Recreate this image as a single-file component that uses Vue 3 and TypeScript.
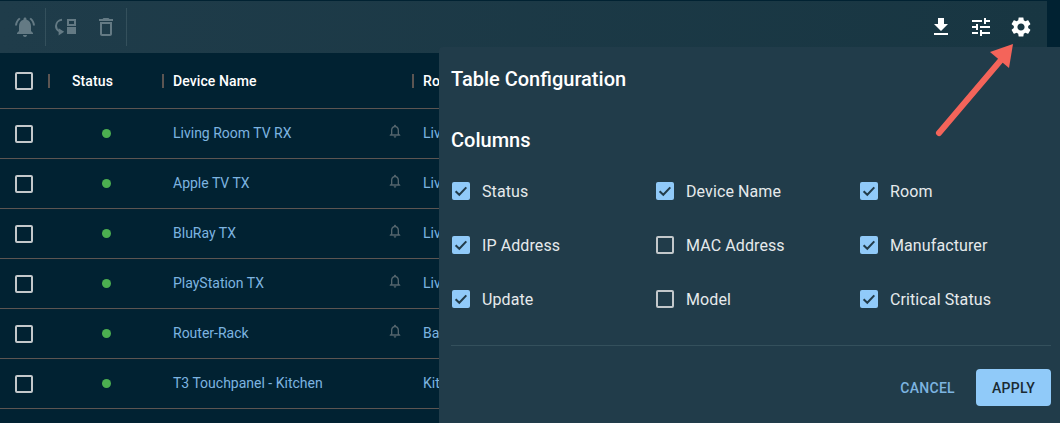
<template>
  <div class="page">
    <div class="toolbar">
      <div class="tool-group">
        <button class="tool dim">
          <svg viewBox="0 0 24 24"><path :d="icons.bellActive" /></svg>
        </button>
      </div>
      <div class="tool-group wide">
        <button class="tool dim">
          <svg viewBox="0 0 24 24">
            <path d="M8 4.800C4.500 5.200 2 7.800 2 11c0 2.300 1.300 4.200 3.300 5.200" fill="none" stroke="currentColor" stroke-width="2" />
            <path d="M4.600 13.300v7.200l5.600-3.700z" />
            <path d="M13 4h9v7h-9zm2 2v3h5V6zM13 12h9v7h-9z" fill-rule="evenodd" />
          </svg>
        </button>
        <button class="tool dim">
          <svg viewBox="0 0 24 24"><path :d="icons.trash" /></svg>
        </button>
      </div>
      <div class="tool-right">
        <button class="tool"><svg viewBox="0 0 24 24"><path :d="icons.download" /></svg></button>
        <button class="tool"><svg viewBox="0 0 24 24"><path :d="icons.tune" /></svg></button>
        <button class="tool"><svg viewBox="0 0 24 24"><path :d="icons.gear" /></svg></button>
      </div>
    </div>

    <div class="table">
      <div class="row head">
        <span class="cell-check"><span class="box"></span></span>
        <span class="th status-th">Status</span>
        <span class="th name-th">Device Name</span>
        <span class="th room-th">Room</span>
      </div>
      <div v-for="device in devices" :key="device.name" class="row">
        <span class="cell-check"><span class="box"></span></span>
        <span class="cell-status"><span class="dot"></span></span>
        <span class="cell-name">
          <span>{{ device.name }}</span>
          <svg v-if="device.bell" class="row-bell" viewBox="0 0 24 24"><path :d="icons.bell" /></svg>
        </span>
        <span class="cell-room">{{ device.room }}</span>
      </div>
    </div>

    <div class="panel">
      <h2 class="panel-title">Table Configuration</h2>
      <h3 class="panel-sub">Columns</h3>
      <div class="options">
        <label v-for="col in columns" :key="col.label" class="option">
          <span class="box" :class="{ checked: col.on }">
            <svg v-if="col.on" viewBox="0 0 18 18"><path d="M3.600 9.200l3.700 3.600 7-7.400" /></svg>
          </span>
          <span>{{ col.label }}</span>
        </label>
      </div>
      <div class="panel-actions">
        <button class="btn-cancel">CANCEL</button>
        <button class="btn-apply">APPLY</button>
      </div>
    </div>

    <svg class="arrow" viewBox="0 0 90 100">
      <path d="M9 93L71 20" />
      <path class="head-fill" d="M83 4L79 28L60 12z" />
    </svg>
  </div>
</template>

<script setup lang="ts">
const icons = {
  bellActive:
    'M7.58 4.08L6.15 2.65C3.75 4.48 2.17 7.3 2.03 10.5h2c.15-2.65 1.51-4.97 3.55-6.42zm12.39 6.42h2c-.15-3.2-1.73-6.02-4.12-7.85l-1.42 1.43c2.02 1.45 3.39 3.77 3.54 6.42zM18 11c0-3.07-1.64-5.64-4.5-6.32V4c0-.83-.67-1.5-1.5-1.5s-1.5.67-1.5 1.5v.68C7.63 5.36 6 7.92 6 11v5l-2 2v1h16v-1l-2-2v-5zm-6 11c.14 0 .27-.01.4-.04.65-.14 1.18-.58 1.44-1.18.1-.24.15-.5.15-.78h-4c.01 1.1.9 2 2.01 2z',
  bell:
    'M12 22c1.1 0 2-.9 2-2h-4c0 1.1.9 2 2 2zm6-6v-5c0-3.07-1.63-5.64-4.5-6.32V4c0-.83-.67-1.5-1.5-1.5s-1.5.67-1.5 1.5v.68C7.64 5.36 6 7.92 6 11v5l-2 2v1h16v-1l-2-2zm-2 1H8v-6c0-2.48 1.51-4.5 4-4.5s4 2.02 4 4.5v6z',
  trash: 'M6 19c0 1.1.9 2 2 2h8c1.1 0 2-.9 2-2V7H6v12zM8 9h8v10H8V9zm7.5-5l-1-1h-5l-1 1H5v2h14V4z',
  download: 'M19 9h-4V3H9v6H5l7 7 7-7zM5 18v2h14v-2H5z',
  tune: 'M3 17v2h6v-2H3zM3 5v2h10V5H3zm10 16v-2h8v-2h-8v-2h-2v6h2zM7 9v2H3v2h4v2h2V9H7zm14 4v-2H11v2h10zm-6-4h2V7h4V5h-4V3h-2v6z',
  gear:
    'M19.14 12.94c.04-.3.06-.61.06-.94 0-.32-.02-.64-.07-.94l2.03-1.58c.18-.14.23-.41.12-.61l-1.92-3.32c-.12-.22-.37-.29-.59-.22l-2.39.96c-.5-.38-1.03-.7-1.62-.94l-.36-2.54c-.04-.24-.24-.41-.48-.41h-3.84c-.24 0-.43.17-.47.41l-.36 2.54c-.59.24-1.13.57-1.62.94l-2.39-.96c-.22-.08-.47 0-.59.22L2.74 8.87c-.12.21-.08.47.12.61l2.03 1.58c-.05.3-.09.63-.09.94s.02.64.07.94l-2.03 1.58c-.18.14-.23.41-.12.61l1.92 3.32c.12.22.37.29.59.22l2.39-.96c.5.38 1.03.7 1.62.94l.36 2.54c.05.24.24.41.48.41h3.84c.24 0 .44-.17.47-.41l.36-2.54c.59-.24 1.13-.56 1.62-.94l2.39.96c.22.08.47 0 .59-.22l1.92-3.32c.12-.22.07-.47-.12-.61l-2.01-1.58zM12 15.6c-1.98 0-3.6-1.62-3.6-3.6s1.62-3.6 3.6-3.6 3.6 1.62 3.6 3.6-1.62 3.6-3.6 3.6z'
}

const devices = [
  { name: 'Living Room TV RX', room: 'Living Room', bell: true },
  { name: 'Apple TV TX', room: 'Living Room', bell: true },
  { name: 'BluRay TX', room: 'Living Room', bell: true },
  { name: 'PlayStation TX', room: 'Living Room', bell: true },
  { name: 'Router-Rack', room: 'Basement', bell: true },
  { name: 'T3 Touchpanel - Kitchen', room: 'Kitchen', bell: false }
]

const columns = [
  { label: 'Status', on: true },
  { label: 'Device Name', on: true },
  { label: 'Room', on: true },
  { label: 'IP Address', on: true },
  { label: 'MAC Address', on: false },
  { label: 'Manufacturer', on: true },
  { label: 'Update', on: true },
  { label: 'Model', on: false },
  { label: 'Critical Status', on: true }
]
</script>

<style>
html,
body {
  margin: 0;
  background: #012232;
}
</style>

<style scoped>
.page {
  position: relative;
  width: 1060px;
  height: 423px;
  overflow: hidden;
  background: #012232;
  font-family: Roboto, sans-serif;
  color: #fff;
}

.toolbar {
  display: flex;
  align-items: stretch;
  box-sizing: border-box;
  width: 1047px;
  height: 53px;
  padding: 7px 0;
  border-top: 1px solid #012232;
  background: linear-gradient(90deg, #1f3c4a, #183642);
}

.tool-group {
  display: flex;
  align-items: center;
  width: 45px;
  border-right: 1px solid #34505c;
}

.tool-group.wide {
  gap: 16px;
  width: 81px;
  padding-left: 8px;
  box-sizing: border-box;
}

.tool-right {
  display: flex;
  align-items: center;
  gap: 16px;
  margin-left: auto;
  padding-right: 14px;
}

.tool {
  display: flex;
  align-items: center;
  justify-content: center;
  width: 24px;
  height: 24px;
  padding: 0;
  border: 0;
  background: none;
  color: #fff;
}

.tool svg {
  width: 24px;
  height: 24px;
  fill: currentColor;
}

.tool-group:first-child .tool {
  margin-left: 13px;
}

.tool.dim {
  color: #647a84;
}

.table {
  width: 439px;
  overflow: hidden;
}

.row {
  display: grid;
  grid-template-columns: 48px 114px 250px 1fr;
  align-items: center;
  box-sizing: border-box;
  height: 50px;
  border-bottom: 1px solid #5c5552;
  font-size: 14px;
  color: #7db4e0;
}

.row.head {
  height: 56px;
  font-weight: 500;
  letter-spacing: 0.1px;
  color: #fff;
}

.cell-check {
  display: flex;
  padding-left: 15px;
}

.box {
  display: block;
  flex: none;
  box-sizing: border-box;
  width: 18px;
  height: 18px;
  border: 2px solid #c3c8cb;
  border-radius: 2px;
}

.box svg {
  display: block;
  width: 18px;
  height: 18px;
  fill: none;
  stroke: #223c4a;
  stroke-width: 2px;
}

.box.checked {
  border: 0;
  background: #90caf9;
}

.th {
  display: flex;
  align-items: center;
  height: 14px;
  border-left: 2px solid #5c5552;
}

.status-th {
  padding-left: 22px;
}

.name-th {
  padding-left: 9px;
}

.room-th {
  padding-left: 9px;
}

.cell-status {
  display: flex;
  padding-left: 54px;
}

.dot {
  width: 9px;
  height: 9px;
  border-radius: 50%;
  background: #4caf50;
}

.cell-name {
  display: flex;
  align-items: center;
  justify-content: space-between;
  padding: 0 9px 2px 11px;
}

.row-bell {
  width: 16px;
  height: 16px;
  margin-top: -3px;
  fill: #55666e;
}

.cell-room {
  padding: 0 0 2px 11px;
  white-space: nowrap;
}

.panel {
  position: absolute;
  top: 47px;
  left: 439px;
  width: 612px;
  height: 376px;
  padding: 0 9px 0 12px;
  border-top-left-radius: 4px;
  background: #213c4a;
}

.panel-title {
  margin: 19px 0 0;
  font-size: 20px;
  font-weight: 500;
  line-height: 26px;
}

.panel-sub {
  margin: 35px 0 0;
  font-size: 20px;
  font-weight: 500;
  line-height: 26px;
}

.options {
  display: grid;
  grid-template-columns: repeat(3, 204px);
  grid-auto-rows: 54px;
  margin-top: 29px;
  font-size: 16px;
  letter-spacing: 0.1px;
  color: #e6eaec;
}

.option {
  display: flex;
  align-items: flex-start;
  gap: 12px;
  padding-left: 1px;
  line-height: 18px;
}

.option span:last-child {
  padding-top: 1px;
}

.panel-actions {
  display: flex;
  justify-content: flex-end;
  align-items: flex-start;
  gap: 11px;
  width: 600px;
  margin-top: 1px;
  padding-top: 23px;
  border-top: 1px solid #34505c;
}

.btn-cancel,
.btn-apply {
  height: 37px;
  padding: 0 16px;
  border: 0;
  border-radius: 4px;
  background: none;
  font-family: inherit;
  font-size: 14px;
  font-weight: 500;
  letter-spacing: 0.3px;
}

.btn-cancel {
  padding: 0 10px;
  color: #7db4e0;
}

.btn-apply {
  background: #90caf9;
  color: #1b2a33;
}

.arrow {
  position: absolute;
  top: 40px;
  left: 930px;
  width: 90px;
  height: 100px;
}

.arrow path {
  fill: none;
  stroke: #f4645a;
  stroke-width: 6px;
  stroke-linecap: round;
}

.arrow .head-fill {
  fill: #f4645a;
  stroke: none;
}
</style>
